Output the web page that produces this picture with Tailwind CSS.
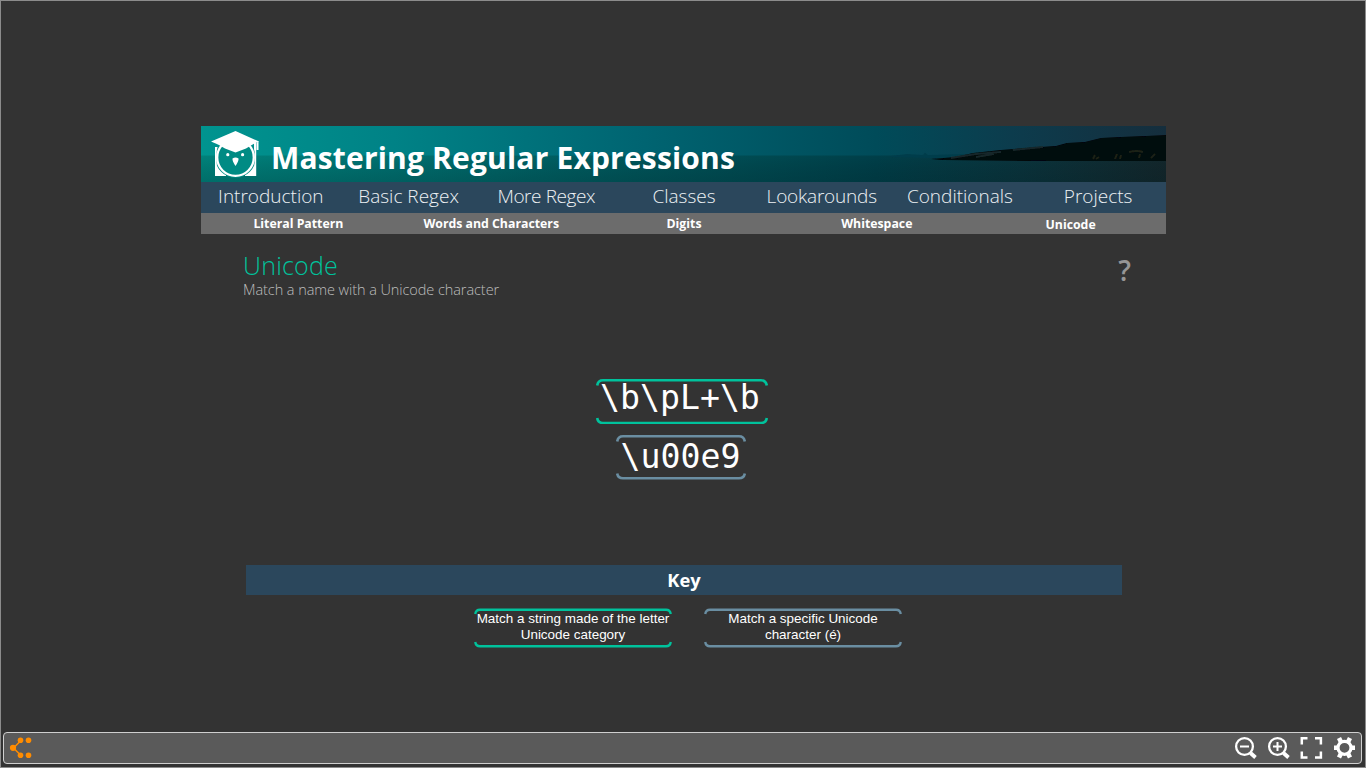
<!DOCTYPE html>
<html lang="en">
<head>
<meta charset="utf-8">
<title>Mastering Regular Expressions</title>
<script src="https://cdn.jsdelivr.net/npm/@tailwindcss/browser@4"></script>
</head>
<body class="bg-[#333] text-white font-['Open_Sans',sans-serif]">
<div class="flex h-screen w-screen flex-col overflow-hidden border border-[#8c8c8c] px-[2px] pb-[3px]">
  <main class="ml-[198px] w-[965px] flex-1 pt-[125px]">
    <header class="relative h-14 overflow-hidden">
      <svg class="absolute inset-0" width="965" height="56" viewBox="0 0 965 56">
        <defs>
          <linearGradient id="sky"><stop offset="0" stop-color="#00948f"/><stop offset=".2" stop-color="#008286"/><stop offset=".45" stop-color="#006572"/><stop offset=".7" stop-color="#004b59"/><stop offset=".85" stop-color="#0d3b4c"/><stop offset="1" stop-color="#152e3d"/></linearGradient>
          <linearGradient id="sea"><stop offset="0" stop-color="#00827b"/><stop offset=".2" stop-color="#007070"/><stop offset=".45" stop-color="#00565b"/><stop offset=".7" stop-color="#003f49"/><stop offset=".85" stop-color="#0a343d"/><stop offset="1" stop-color="#13272c"/></linearGradient>
          <linearGradient id="depth" x2="0" y2="1"><stop offset="0" stop-color="#000" stop-opacity="0"/><stop offset="1" stop-color="#001518" stop-opacity=".18"/></linearGradient>
          <filter id="soft"><feGaussianBlur stdDeviation=".7"/></filter>
        </defs>
        <rect width="965" height="56" fill="url(#sky)"/>
        <rect y="29.5" width="965" height="27" fill="url(#sea)"/>
        <rect y="29.5" width="965" height="27" fill="url(#depth)"/>
        <g filter="url(#soft)">
          <path d="M690 30 L706 28 L722 29 L724 26.500 L727 29 L765 28 L790 30 L770 33 L690 31Z" fill="#063d4b"/>
          <path d="M730 33 L755 31 L772 27 L800 24 L825 22 L855 20 L866 17 L884 16 L900 12 L920 11 L945 10 L968 9 V35 H850 L742 34Z" fill="#020708"/>
          <path d="M750 32l25-4 25-2M775 31l18-3M812 24l30-3" stroke="#15282a" stroke-width="2" fill="none"/>
          <path d="M892 33l2-4M895 33l3-2M914 33l2-5M919 33l1-4M928 26q8-2 14 0M938 32l1-4M950 32l4-4" stroke="#1d2417" stroke-width="2" fill="none"/>
        </g>
      </svg>
      <div class="relative flex h-full items-center pl-2.5">
        <svg width="49" height="48" viewBox="0 0 49 48" fill="#fff">
          <path d="M4 17H6.500V32Q8 39 15 44.500V46H4Z"/>
          <path d="M45 12H43V32Q41 39 34 44.500V46H45Z"/>
          <circle cx="24.500" cy="27.500" r="20.300" fill="#008b84"/>
          <path d="M4 17H5.700V46H4ZM43.600 13H45.200V46H43.600Z"/>
          <circle cx="24.500" cy="27.500" r="18.300" fill="#008b84" stroke="#fff" stroke-width="2.300"/>
          <path d="M24.500 1L48 11.500 42.500 14 35 18.500 24.500 22.500 14 18.500 7 14.500 0 11.500Z"/>
          <path d="M47.500 11V20H45.500V13Z"/>
          <circle cx="16.800" cy="24.700" r="1.600"/><circle cx="31.600" cy="24.700" r="1.600"/>
          <path d="M21.500 28.500Q24.500 26.500 27.500 28.500 27.800 31 24.500 36 21.200 31 21.500 28.500Z"/>
        </svg>
        <h1 class="ml-[11px] mt-[7px] whitespace-nowrap text-[30px] leading-none font-bold tracking-[0.18px]">Mastering Regular Expressions</h1>
      </div>
    </header>
    <nav class="grid h-[31px] grid-cols-7 bg-[#2b475c] pl-px text-center text-[19px] leading-[29px] font-light text-[#eef2f5]">
      <a>Introduction</a><a>Basic Regex</a><a class="tracking-[-0.4px]">More Regex</a><a>Classes</a><a class="tracking-[-0.2px]">Lookarounds</a><a class="pl-px">Conditionals</a><a class="pl-[2px]">Projects</a>
    </nav>
    <nav class="grid h-[21px] grid-cols-5 bg-[#6c6c6c] pl-px text-center text-[12.300px] leading-[21px] font-bold">
      <a>Literal Pattern</a><a>Words and Characters</a><a>Digits</a><a>Whitespace</a><a class="pt-px pl-[2px]">Unicode</a>
    </nav>
    <section class="flex justify-between pr-[35px] pl-[42px]">
      <div>
        <h2 class="mt-[15px] text-[25px] leading-[32px] font-light tracking-[0.2px] text-[#00c29c]">Unicode</h2>
        <p class="text-[14.500px] leading-[17px] font-light tracking-[-0.07px] whitespace-nowrap text-[#bdbdbd]">Match a name with a Unicode character</p>
      </div>
      <span class="mt-[19px] text-[28px] leading-[34px] font-semibold text-[#969696]">?</span>
    </section>
    <section class="mt-[80px] flex flex-col items-center gap-[10px] font-['DejaVu_Sans_Mono',monospace] text-[33.200px] leading-[38px]">
      <div class="relative -left-[1.500px] h-[46px] w-[172px] pt-px pl-[4px]">
        <svg class="absolute inset-0" width="172" height="46" fill="none" stroke="#00c29c" stroke-width="2.600"><path d="M1.200 7.500Q2 2.300 7 2.300H165Q170 2.300 170.800 7.500M1.200 40Q2 45 7 45H165Q170 45 170.800 40"/></svg>
        <span class="relative">\b\pL+\b</span>
      </div>
      <div class="relative -left-[2.500px] h-[46px] w-[130px] pl-[4.500px] pt-[4px]">
        <svg class="absolute inset-0" width="130" height="46" fill="none" stroke="#6a8ea2" stroke-width="2.600"><path d="M1.200 7.500Q2 2.300 7 2.300H123Q128 2.300 128.800 7.500M1.200 39.500Q2 44.300 7 44.300H123Q128 44.300 128.800 39.500"/></svg>
        <span class="relative">\u00e9</span>
      </div>
    </section>
    <section class="mt-[85px]">
      <h3 class="ml-[45px] h-[30px] w-[876px] bg-[#2b475c] text-center text-[18.300px] leading-[29px] font-bold">Key</h3>
      <div class="mt-[13px] ml-[273px] flex gap-8 text-center font-['Liberation_Sans',sans-serif] text-[13.450px] leading-4">
        <div class="relative h-10 w-[198px] pt-[3px]">
          <svg class="absolute inset-0" width="198" height="40" fill="none" stroke="#00c29c" stroke-width="2.400"><path d="M1.200 6Q2 1.700 6 1.700H192Q196 1.700 196.800 6M1.200 34Q2 38.300 6 38.300H192Q196 38.300 196.800 34"/></svg>
          <p class="relative whitespace-nowrap">Match a string made of the letter<br>Unicode category</p>
        </div>
        <div class="relative h-10 w-[198px] pt-[3px]">
          <svg class="absolute inset-0" width="198" height="40" fill="none" stroke="#6a8ea2" stroke-width="2.400"><path d="M1.200 6Q2 1.700 6 1.700H192Q196 1.700 196.800 6M1.200 34Q2 38.300 6 38.300H192Q196 38.300 196.800 34"/></svg>
          <p class="relative whitespace-nowrap">Match a specific Unicode<br>character (é)</p>
        </div>
      </div>
    </section>
  </main>
  <footer class="flex h-8 w-[1359px] items-center justify-between rounded-[4px] border border-[#cfcfcf] bg-[#5a5a5a] pr-[5px] pl-[5px]">
    <svg width="24" height="24" viewBox="0 0 24 24" fill="#ff8c00" stroke="#ff8c00"><path d="M12 4.500L4.500 12l7.500 7.500" fill="none" stroke-width="1.500"/><g stroke="none"><circle cx="4" cy="11.800" r="3.100"/><circle cx="11.500" cy="4.300" r="2.800"/><circle cx="11.500" cy="19.300" r="2.800"/><circle cx="19.500" cy="4.300" r="2.800"/><circle cx="19.500" cy="19.300" r="2.800"/></g></svg>
    <div class="flex items-center gap-[9px] text-white">
      <svg width="24" height="24" viewBox="0 0 24 24" fill="none" stroke="#fff"><circle cx="11.500" cy="10.500" r="8.400" stroke-width="2.300"/><path d="M17.500 17l5 4.500" stroke-width="3.800"/><path d="M7 10.500h9" stroke-width="2"/></svg>
      <svg width="24" height="24" viewBox="0 0 24 24" fill="none" stroke="#fff"><circle cx="11.500" cy="10.500" r="8.400" stroke-width="2.300"/><path d="M17.500 17l5 4.500" stroke-width="3.800"/><path d="M7 10.500h9M11.500 6v9" stroke-width="2"/></svg>
      <svg width="24" height="24" viewBox="0 0 24 24" fill="none" stroke="#fff" stroke-width="2.500"><path d="M2.800 8.500V2.300H8.500M16 2.300h5.900V8.500M2.800 15.500v5.900H8.500M16 21.400h5.900V15.500"/></svg>
      <svg width="24" height="24" viewBox="0 0 24 24" fill="none" stroke="#fff"><circle cx="12.500" cy="11.800" r="6.500" stroke-width="3.200"/><path d="M19 11.800h4M6 11.800H2M16 6l2-4M9 6l-2-4M16 17.600l2 4M9 17.600l-2 4" stroke-width="4.500"/></svg>
    </div>
  </footer>
</div>
</body>
</html>
